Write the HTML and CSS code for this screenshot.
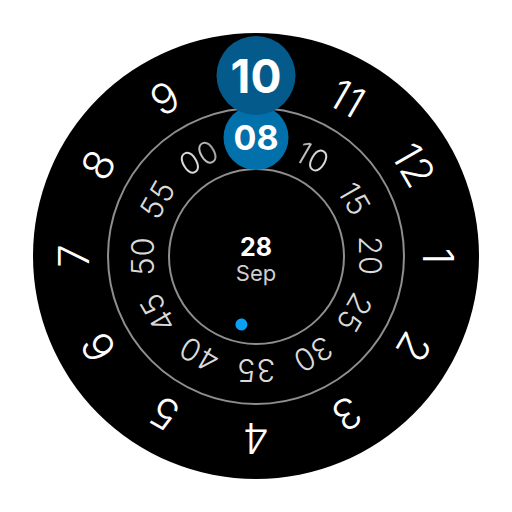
FILE: index.html
```html
<!DOCTYPE html>
<html lang="en">
<head>
<meta charset="utf-8">
<title>Watch face</title>
<link rel="stylesheet" href="styles.css">
</head>
<body>
<div class="stage">
  <div class="face">
    <div class="ring ring-outer"></div>
    <div class="ring ring-inner"></div>
    <div class="date">
      <span class="day">28</span>
      <span class="month">Sep</span>
    </div>

    <span class="mark hour" style="--a:30deg">11</span>
    <span class="mark hour" style="--a:60deg">12</span>
    <span class="mark hour" style="--a:90deg">1</span>
    <span class="mark hour" style="--a:120deg">2</span>
    <span class="mark hour" style="--a:150deg">3</span>
    <span class="mark hour" style="--a:180deg">4</span>
    <span class="mark hour" style="--a:210deg">5</span>
    <span class="mark hour" style="--a:240deg">6</span>
    <span class="mark hour" style="--a:270deg">7</span>
    <span class="mark hour" style="--a:300deg">8</span>
    <span class="mark hour" style="--a:330deg">9</span>

    <span class="mark minute fade-r" style="--a:30deg">10</span>
    <span class="mark minute" style="--a:60deg">15</span>
    <span class="mark minute" style="--a:90deg">20</span>
    <span class="mark minute" style="--a:120deg">25</span>
    <span class="mark minute" style="--a:150deg">30</span>
    <span class="mark minute" style="--a:180deg">35</span>
    <span class="mark minute" style="--a:210deg">40</span>
    <span class="mark minute" style="--a:240deg">45</span>
    <span class="mark minute" style="--a:270deg">50</span>
    <span class="mark minute" style="--a:300deg">55</span>
    <span class="mark minute fade-l" style="--a:330deg">00</span>

    <span class="mark dot" style="--a:192deg"></span>

    <div class="bubble bubble-min">08</div>
    <div class="bubble bubble-hour">10</div>
  </div>
</div>
</body>
</html>
```

FILE: styles.css
```css
* { box-sizing: border-box; }

html, body {
  margin: 0;
  padding: 0;
  background: #ffffff;
}

body {
  font-family: Inter, "Open Sans", sans-serif;
}

.stage {
  width: 512px;
  height: 512px;
  display: flex;
  align-items: center;
  justify-content: center;
}

.face {
  position: relative;
  width: 446px;
  height: 446px;
  border-radius: 50%;
  background: #000000;
  display: grid;
  place-items: center;
}

.ring,
.date {
  grid-area: 1 / 1;
}

.ring {
  border-radius: 50%;
  border: 2px solid #8e8e8e;
}

.ring-outer {
  width: 298px;
  height: 298px;
}

.ring-inner {
  width: 177px;
  height: 177px;
}

.date {
  display: flex;
  flex-direction: column;
  align-items: center;
  gap: 2px;
  padding-top: 6px;
}

.day {
  font-size: 25px;
  line-height: 1;
  font-weight: 700;
  color: #ffffff;
}

.month {
  font-size: 22px;
  line-height: 1;
  font-weight: 400;
  color: #cfcfcf;
}

.mark {
  position: absolute;
  left: 50%;
  top: 50%;
  line-height: 1;
  white-space: nowrap;
  transform: translate(-50%, -50%) rotate(var(--a)) translateY(calc(-1 * var(--r)));
}

.hour {
  --r: 182px;
  font-size: 42px;
  font-weight: 300;
  color: #ffffff;
}

.minute {
  --r: 114px;
  font-size: 31px;
  font-weight: 300;
  letter-spacing: 1px;
  color: #dadada;
}

.fade-l {
  background: linear-gradient(90deg, #dadada 35%, #9a9a9a 100%);
  -webkit-background-clip: text;
  background-clip: text;
  color: transparent;
}

.fade-r {
  background: linear-gradient(90deg, #a8a8a8 0%, #dadada 60%);
  -webkit-background-clip: text;
  background-clip: text;
  color: transparent;
}

.dot {
  --r: 70px;
  width: 12px;
  height: 12px;
  border-radius: 50%;
  background: #0aa0f6;
}

.bubble {
  position: absolute;
  left: 50%;
  transform: translateX(-50%);
  border-radius: 50%;
  display: flex;
  align-items: center;
  justify-content: center;
  color: #ffffff;
  font-weight: 700;
  line-height: 1;
}

.bubble-hour {
  top: 3px;
  width: 79px;
  height: 79px;
  background: #045b8b;
  font-size: 46px;
}

.bubble-min {
  top: 72px;
  width: 65px;
  height: 65px;
  background: #0270ab;
  font-size: 34px;
}
```
